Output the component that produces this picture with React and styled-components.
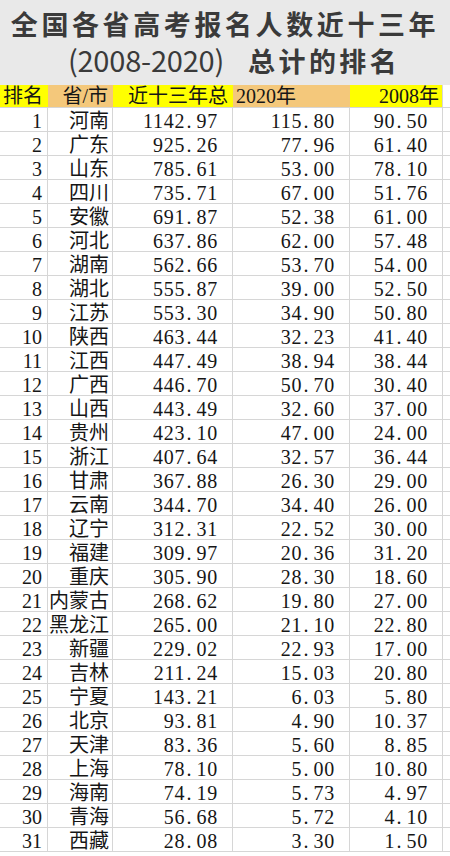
import React from "react";
import styled, { createGlobalStyle } from "styled-components";

const rows = [
  [1, "河南", "1142.97", "115.80", "90.50"],
  [2, "广东", "925.26", "77.96", "61.40"],
  [3, "山东", "785.61", "53.00", "78.10"],
  [4, "四川", "735.71", "67.00", "51.76"],
  [5, "安徽", "691.87", "52.38", "61.00"],
  [6, "河北", "637.86", "62.00", "57.48"],
  [7, "湖南", "562.66", "53.70", "54.00"],
  [8, "湖北", "555.87", "39.00", "52.50"],
  [9, "江苏", "553.30", "34.90", "50.80"],
  [10, "陕西", "463.44", "32.23", "41.40"],
  [11, "江西", "447.49", "38.94", "38.44"],
  [12, "广西", "446.70", "50.70", "30.40"],
  [13, "山西", "443.49", "32.60", "37.00"],
  [14, "贵州", "423.10", "47.00", "24.00"],
  [15, "浙江", "407.64", "32.57", "36.44"],
  [16, "甘肃", "367.88", "26.30", "29.00"],
  [17, "云南", "344.70", "34.40", "26.00"],
  [18, "辽宁", "312.31", "22.52", "30.00"],
  [19, "福建", "309.97", "20.36", "31.20"],
  [20, "重庆", "305.90", "28.30", "18.60"],
  [21, "内蒙古", "268.62", "19.80", "27.00"],
  [22, "黑龙江", "265.00", "21.10", "22.80"],
  [23, "新疆", "229.02", "22.93", "17.00"],
  [24, "吉林", "211.24", "15.03", "20.80"],
  [25, "宁夏", "143.21", "6.03", "5.80"],
  [26, "北京", "93.81", "4.90", "10.37"],
  [27, "天津", "83.36", "5.60", "8.85"],
  [28, "上海", "78.10", "5.00", "10.80"],
  [29, "海南", "74.19", "5.73", "4.97"],
  [30, "青海", "56.68", "5.72", "4.10"],
  [31, "西藏", "28.08", "3.30", "1.50"],
];

const GlobalStyle = createGlobalStyle`
  html, body {
    margin: 0;
    padding: 0;
    background: #fff;
  }
`;

const Page = styled.div`
  width: 450px;
  height: 856px;
  overflow: hidden;
  background: #fff;
`;

const Title = styled.div`
  height: 85px;
  box-sizing: border-box;
  padding-top: 5px;
  background: #e9e9e9;
  color: #3a3a3a;
  font-family: "Noto Sans CJK SC", sans-serif;
  font-weight: 700;
  text-align: center;
`;

const TitleLine = styled.div`
  font-size: 27px;
  line-height: 37px;
  letter-spacing: ${(p) => p.$spacing || "3.6px"};
  white-space: nowrap;
  padding-left: ${(p) => p.$indent || "0px"};
`;

const Years = styled.span`
  font-size: 29px;
  line-height: 1;
  font-weight: 400;
  letter-spacing: -0.2px;
  margin-right: 24px;
`;

const Sheet = styled.div`
  display: grid;
  grid-template-columns: 48px 65px 120px 117px 93px 1fr;
  grid-template-rows: 23px;
  grid-auto-rows: 24px;
  font-family: "Liberation Serif", "Noto Sans CJK SC", serif;
  font-size: 20px;
  color: #161616;
`;

const HeadCell = styled.div`
  box-sizing: border-box;
  background: ${(p) => (p.$tan ? "#f4c87b" : p.$blank ? "#fff" : "#ffff00")};
  border-bottom: 1px solid #d6d6d6;
  border-right: ${(p) => (p.$edge ? "1px solid #d6d6d6" : "none")};
  line-height: 23px;
  white-space: nowrap;
  overflow: hidden;
  text-align: ${(p) => p.$align || "right"};
  padding: ${(p) => p.$pad || "0 3px"};
`;

const Cell = styled.div`
  box-sizing: border-box;
  border-bottom: 1px solid #d6d6d6;
  border-right: ${(p) => (p.$last ? "none" : "1px solid #d6d6d6")};
  padding-top: 3px;
  line-height: 20px;
  text-align: right;
  white-space: nowrap;
  padding-right: ${(p) => p.$pr || "14px"};
`;

const Digits = styled.span`
  letter-spacing: 0.8px;
`;

const Dot = styled.span`
  display: inline-block;
  width: 8px;
  padding-right: 3px;
  text-align: center;
`;

function Num({ value }) {
  const [whole, frac] = value.split(".");
  return (
    <Digits>
      {whole}
      <Dot>.</Dot>
      {frac}
    </Digits>
  );
}

export default function App() {
  return (
    <Page>
      <GlobalStyle />
      <Title>
        <TitleLine>全国各省高考报名人数近十三年</TitleLine>
        <TitleLine $spacing="3.4px" $indent="18px">
          <Years>(2008-2020)</Years>总计的排名
        </TitleLine>
      </Title>
      <Sheet>
        <HeadCell $align="left">排名</HeadCell>
        <HeadCell $tan $pad="0 5px 0 0">省/市</HeadCell>
        <HeadCell $pad="0 5px 0 0">近十三年总</HeadCell>
        <HeadCell $tan $align="left">2020年</HeadCell>
        <HeadCell $edge>2008年</HeadCell>
        <HeadCell $blank />
        {rows.map(([rank, name, total, y2020, y2008]) => (
          <React.Fragment key={rank}>
            <Cell $pr="5px">{rank}</Cell>
            <Cell $pr="3px">{name}</Cell>
            <Cell>
              <Num value={total} />
            </Cell>
            <Cell>
              <Num value={y2020} />
            </Cell>
            <Cell>
              <Num value={y2008} />
            </Cell>
            <Cell $last />
          </React.Fragment>
        ))}
      </Sheet>
    </Page>
  );
}
